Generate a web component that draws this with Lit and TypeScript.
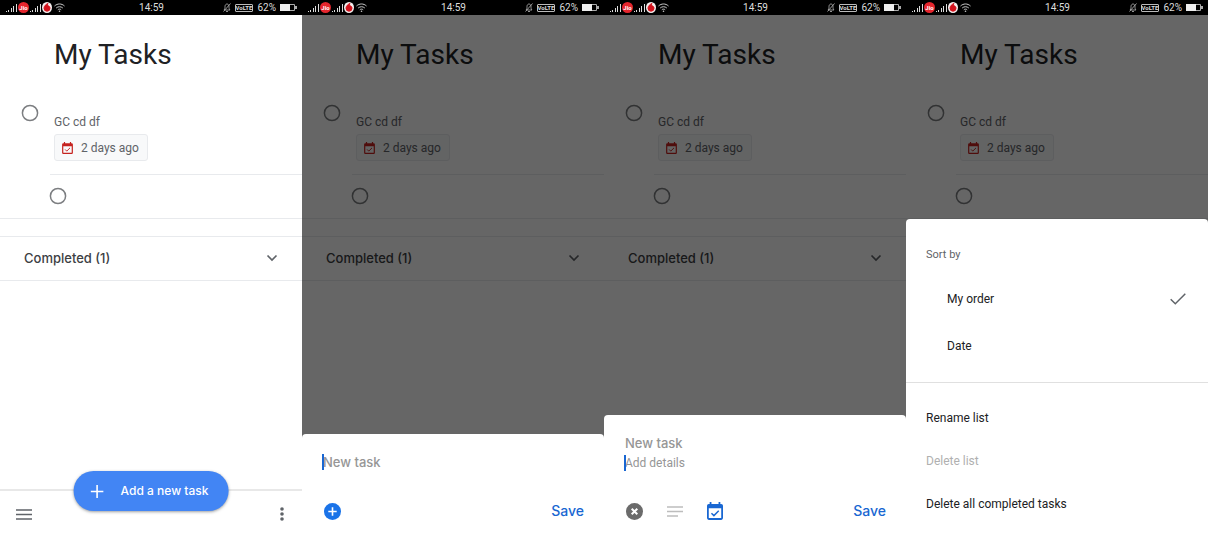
import { LitElement, html, css, svg, nothing } from "lit";
import { customElement, property } from "lit/decorators.js";

const calendarIcon = (cls: string) => html`
  <svg class=${cls} viewBox="0 0 18 20" aria-hidden="true">
    <path
      fill="currentColor"
      fill-rule="evenodd"
      d="M3 0h2v2h8V0h2v2h1a2 2 0 0 1 2 2v14a2 2 0 0 1-2 2H2a2 2 0 0 1-2-2V4a2 2 0 0 1 2-2h1zM2 7v11h14V7z"
    />
    <path d="M5 12.4l2.8 2.8 5.4-5.4" fill="none" stroke="currentColor" stroke-width="1.6" />
  </svg>
`;

const signalIcon = html`
  <svg class="signal" viewBox="0 0 11 8" aria-hidden="true">
    <path d="M0 7h1v1H0zM2 6h1v2H2zM5 4h1v4H5zM7 2h1v6H7zM10 0h1v8h-1z" fill="#ddd" />
  </svg>
`;

@customElement("status-bar")
export class StatusBar extends LitElement {
  static styles = css`
    :host {
      display: grid;
      grid-template-columns: 1fr auto 1fr;
      align-items: center;
      height: 15px;
      padding: 0 5px 0 6px;
      background: #000;
      color: #ddd;
      font: 10px/15px Roboto, sans-serif;
    }
    .side {
      display: flex;
      align-items: center;
      gap: 1px;
    }
    .end {
      justify-content: flex-end;
      gap: 4px;
    }
    .signal {
      width: 11px;
      height: 8px;
    }
    .jio {
      width: 11px;
      height: 11px;
      border-radius: 50%;
      background: #e5262e;
      color: #fff;
      font: 700 6px/11px Roboto, sans-serif;
      text-align: center;
    }
    .carrier {
      width: 10px;
      height: 11px;
    }
    .wifi {
      width: 11px;
      height: 9px;
      margin-left: 1px;
    }
    .bell {
      width: 8px;
      height: 9px;
    }
    .volte {
      border: 1px solid #bbb;
      border-radius: 1px;
      font: 700 6px/6px Roboto, sans-serif;
    }
    .battery {
      width: 17px;
      height: 7px;
    }
  `;

  render() {
    return html`
      <div class="side">
        ${signalIcon}
        <span class="jio">Jio</span>
        ${signalIcon}
        <svg class="carrier" viewBox="0 0 10 11" aria-hidden="true">
          <ellipse cx="5" cy="5.5" rx="5" ry="5.5" fill="#f4eeee" />
          <path d="M6 1.5C4 2.2 2 4 2 6.2a3 3 0 0 0 6 0C8 4.6 6.8 3.9 5.5 3.6 5.4 2.8 5.6 2 6 1.5z" fill="#d3121c" stroke="#d3121c" />
        </svg>
        <svg class="wifi" viewBox="0 0 11 9" aria-hidden="true">
          <g fill="none" stroke="#ccc">
            <path d="M.5 3C3.5.3 7.5.3 10.5 3M2.2 5c2-1.7 4.6-1.7 6.6 0M3.8 6.8c1-.9 2.4-.9 3.4 0" />
          </g>
          <circle cx="5.5" cy="8.2" r=".8" fill="#ccc" />
        </svg>
      </div>
      <span>14:59</span>
      <div class="side end">
        <svg class="bell" viewBox="0 0 8 9" aria-hidden="true">
          <path d="M1 7c1-1 1-2 1-3.5C2 2 3 1 4 1s2 1 2 2.5C6 5 6 6 7 7zM3 8.5h2M.5 8.5l7-8" fill="none" stroke="#bbb" stroke-width=".8" />
        </svg>
        <span class="volte">VoLTE</span>
        <span>62%</span>
        <svg class="battery" viewBox="0 0 17 7" aria-hidden="true">
          <path d="M.5.5h14v6H.5z" fill="none" stroke="#aaa" />
          <path d="M0 0h10v7H0z" fill="#eee" />
          <path d="M15 2h2v3h-2z" fill="#aaa" />
        </svg>
      </div>
    `;
  }
}

@customElement("task-screen")
export class TaskScreen extends LitElement {
  @property() sheet: "none" | "new" | "details" | "menu" = "none";

  static styles = css`
    :host {
      --brand: Inter, "Open Sans", sans-serif;
      position: relative;
      display: flex;
      flex-direction: column;
      min-width: 0;
      min-height: 100vh;
      overflow: hidden;
      background: #fff;
      color: #5f6368;
      font: 12px/16px Roboto, sans-serif;
    }
    button,
    input {
      margin: 0;
      padding: 0;
      border: 0;
      background: none;
      color: inherit;
      font: inherit;
    }
    svg {
      display: block;
      flex: none;
    }
    main {
      flex: 1;
    }
    h1 {
      margin: 0;
      padding: 22px 0 0 54px;
      color: #202124;
      font: 400 28px/36px Roboto, sans-serif;
    }
    .task {
      display: grid;
      grid-template-columns: 32px 1fr;
      padding: 32px 0 13px 22px;
    }
    .ring {
      display: grid;
      width: 16px;
      height: 16px;
    }
    .ring input,
    .ring svg {
      grid-area: 1 / 1;
      width: 16px;
      height: 16px;
    }
    .ring svg {
      overflow: visible;
    }
    .ring input,
    .option input {
      appearance: none;
    }
    .info {
      padding-top: 9px;
    }
    .info p {
      margin: 0 0 4px;
    }
    .chip {
      display: flex;
      align-items: center;
      gap: 8px;
      height: 27px;
      padding: 0 8px 0 7px;
      border: 1px solid #e8eaed;
      border-radius: 3px;
      background: #f8f9fa;
    }
    .due {
      width: 11px;
      height: 12px;
      color: #c5221f;
    }
    .subtask {
      margin-left: 50px;
      padding: 13px 0 14px;
      border-top: 1px solid #e8eaed;
    }
    .completed {
      display: flex;
      align-items: center;
      justify-content: space-between;
      width: 100%;
      height: 45px;
      padding: 0 24px 1px;
      border: solid #e8eaed;
      border-width: 1px 0;
      color: #3c4043;
      font: 500 13px/20px var(--brand);
    }
    .gap {
      height: 17px;
      border-top: 1px solid #e8eaed;
    }
    .chevron {
      width: 12px;
      height: 12px;
    }
    footer {
      position: relative;
      display: flex;
      align-items: center;
      justify-content: space-between;
      height: 46px;
      padding: 0 16px 1px;
      border-top: 2px solid #e8e8e8;
    }
    .menu {
      width: 16px;
      height: 11px;
    }
    .dots {
      width: 8px;
      height: 14px;
    }
    .dots,
    .menu {
      color: #5f6368;
    }
    .fab {
      position: absolute;
      bottom: 27px;
      left: 50%;
      display: flex;
      align-items: center;
      gap: 17px;
      height: 40px;
      padding: 0 20px 0 17px;
      border-radius: 20px;
      background: #4285f4;
      box-shadow: 0 1px 3px rgb(60 64 67 / 50%);
      color: #fff;
      font: 500 12px/16px var(--brand);
      white-space: nowrap;
      transform: translateX(-50%);
    }
    .plus {
      width: 13px;
      height: 13px;
    }
    .scrim {
      position: absolute;
      inset: 15px 0 0;
      display: flex;
      flex-direction: column;
      justify-content: flex-end;
      background: rgb(0 0 0 / 60%);
    }
    .sheet {
      border-radius: 4px 4px 0 0;
      background: #fff;
    }
    .compose {
      padding: 18px 20px 15px;
    }
    .field {
      display: flex;
      height: 19px;
    }
    .field input {
      flex: 1;
      min-width: 0;
      padding-left: 1px;
      outline: 0;
    }
    .field input::placeholder {
      color: #969696;
      opacity: 1;
    }
    .title {
      height: 20px;
      font: 500 13px/20px var(--brand);
    }
    .caret {
      position: relative;
    }
    .caret::before {
      content: "";
      position: absolute;
      top: 2px;
      left: 0;
      width: 2px;
      height: 16px;
      background: #1967d2;
    }
    .actions {
      display: flex;
      align-items: center;
      gap: 24px;
      height: 24px;
      margin-top: 27px;
      padding: 0 0 0 2px;
      color: #1a73e8;
    }
    .round {
      width: 17px;
      height: 17px;
    }
    .lines {
      width: 16px;
      height: 11px;
    }
    .date {
      width: 16px;
      height: 18px;
      color: #1967d2;
    }
    .gray {
      color: #6b6b6b;
    }
    .light {
      color: #bdbdbd;
    }
    .save {
      margin-left: auto;
      color: #1967d2;
      font: 500 14px/20px var(--brand);
    }
    .options {
      display: flex;
      flex-direction: column;
      color: #202124;
    }
    .sort {
      padding: 28px 20px 13px;
      border-bottom: 1px solid #e0e0e0;
    }
    .sort-title {
      display: block;
      margin-bottom: 12px;
      color: #5f6368;
      font-size: 11px;
    }
    .option {
      display: flex;
      align-items: center;
      height: 47px;
      padding-left: 21px;
    }
    .option svg {
      width: 16px;
      height: 12px;
      margin: 0 2px 0 auto;
    }
    .commands {
      display: flex;
      flex-direction: column;
      padding: 13px 20px;
    }
    .commands button {
      height: 43px;
      text-align: left;
    }
    .commands button:disabled {
      color: #b0b0b0;
    }
  `;

  private ring(label: string) {
    return html`
      <label class="ring">
        <input type="checkbox" aria-label=${label} />
        <svg viewBox="0 0 16 16" aria-hidden="true">
          <circle cx="8" cy="8" r="7.6" fill="none" stroke="#7c7e81" stroke-width="1.5" />
        </svg>
      </label>
    `;
  }

  private compose(details: boolean) {
    return html`
      <form class="sheet compose" @submit=${(e: Event) => e.preventDefault()}>
        <div class="field title ${details ? "" : "caret"}">
          <input aria-label="New task" placeholder="New task" />
        </div>
        ${details
          ? html`<div class="field caret">
              <input aria-label="Add details" placeholder="Add details" />
            </div>`
          : nothing}
        <div class="actions">
          <button type="button" aria-label=${details ? "Close" : "More"} class=${details ? "gray" : ""}>
            <svg class="round" viewBox="0 0 17 17">
              <circle cx="8.5" cy="8.5" r="8.5" fill="currentColor" />
              ${details
                ? svg`<path d="M5.7 5.7l5.6 5.6M11.3 5.7l-5.6 5.6" stroke="#fff" stroke-width="2" />`
                : svg`<path d="M8.5 4.3v8.4M4.3 8.5h8.4" stroke="#fff" stroke-width="1.6" />`}
            </svg>
          </button>
          ${details
            ? html`
                <button type="button" aria-label="Details" class="light">
                  <svg class="lines" viewBox="0 0 16 11">
                    <path d="M0 1h16M0 5.5h16M0 10h11" stroke="currentColor" stroke-width="1.5" />
                  </svg>
                </button>
                <button type="button" aria-label="Date">${calendarIcon("date")}</button>
              `
            : nothing}
          <button class="save">Save</button>
        </div>
      </form>
    `;
  }

  private options() {
    return html`
      <div class="sheet options">
        <div class="sort" role="radiogroup" aria-labelledby="sort">
          <span class="sort-title" id="sort">Sort by</span>
          <label class="option">
            <input type="radio" name="sort" checked />My order
            <svg viewBox="0 0 16 12" aria-hidden="true">
              <path d="M.7 6.2l4.6 4.5L15.3.7" fill="none" stroke="#5f6368" stroke-width="1.5" />
            </svg>
          </label>
          <label class="option"><input type="radio" name="sort" />Date</label>
        </div>
        <div class="commands">
          <button>Rename list</button>
          <button disabled>Delete list</button>
          <button>Delete all completed tasks</button>
        </div>
      </div>
    `;
  }

  private completed() {
    return html`
      <div class="gap"></div>
      <button class="completed">
        Completed (1)
        <svg class="chevron" viewBox="0 0 12 12" aria-hidden="true">
          <path d="M1.5 3.5L6 8l4.5-4.5" fill="none" stroke="#5f6368" stroke-width="1.7" />
        </svg>
      </button>
    `;
  }

  render() {
    return html`
      <status-bar></status-bar>
      <main>
        <h1>My Tasks</h1>
        <div class="task">
          ${this.ring("Complete GC cd df")}
          <div class="info">
            <p>GC cd df</p>
            <button class="chip">${calendarIcon("due")}2 days ago</button>
          </div>
        </div>
        <div class="subtask">${this.ring("Complete subtask")}</div>
        ${this.sheet === "menu" ? html`<div class="gap"></div>` : this.completed()}
      </main>
      ${this.sheet === "none"
        ? html`
            <footer>
              <button aria-label="Menu">
                <svg class="menu" viewBox="0 0 16 11">
                  <path d="M0 1h16M0 5.5h16M0 10h16" stroke="currentColor" stroke-width="1.5" />
                </svg>
              </button>
              <button class="fab">
                <svg class="plus" viewBox="0 0 13 13" aria-hidden="true">
                  <path d="M6.5 0v13M0 6.5h13" stroke="#fff" stroke-width="1.6" />
                </svg>
                Add a new task
              </button>
              <button aria-label="More options">
                <svg class="dots" viewBox="0 0 8 14">
                  <g fill="currentColor">
                    <circle cx="4" cy="2" r="1.8" />
                    <circle cx="4" cy="7" r="1.8" />
                    <circle cx="4" cy="12" r="1.8" />
                  </g>
                </svg>
              </button>
            </footer>
          `
        : html`
            <div class="scrim">
              ${this.sheet === "menu" ? this.options() : this.compose(this.sheet === "details")}
            </div>
          `}
    `;
  }
}

@customElement("app-root")
export class AppRoot extends LitElement {
  static styles = css`
    :host {
      display: grid;
      grid-template-columns: repeat(4, 1fr);
      min-height: 100vh;
    }
  `;

  render() {
    return html`
      <task-screen></task-screen>
      <task-screen sheet="new"></task-screen>
      <task-screen sheet="details"></task-screen>
      <task-screen sheet="menu"></task-screen>
    `;
  }
}
